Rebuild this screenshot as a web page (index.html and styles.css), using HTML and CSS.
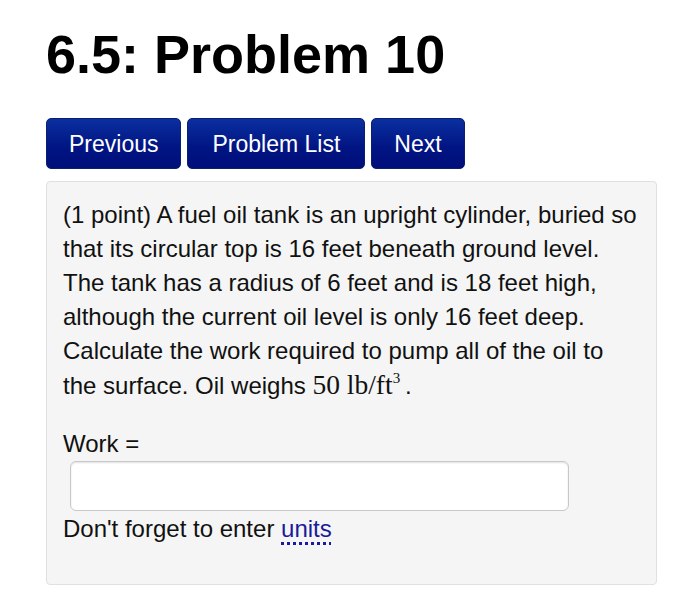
FILE: index.html
```html
<!DOCTYPE html>
<html>
<head>
<meta charset="utf-8">
<link rel="stylesheet" href="styles.css">
</head>
<body>
<h1 class="title">6.5: Problem 10</h1>
<div class="nav">
  <a class="btn">Previous</a>
  <a class="btn btn-wide">Problem List</a>
  <a class="btn">Next</a>
</div>
<div class="panel">
  <p class="text">(1 point) A fuel oil tank is an upright cylinder, buried so that its circular top is 16 feet beneath ground level. The tank has a radius of 6 feet and is 18 feet high, although the current oil level is only 16 feet deep. Calculate the work required to pump all of the oil to the surface. Oil weighs <span class="math">50&nbsp;lb/ft<sup>3</sup></span>&thinsp;.</p>
  <p class="label">Work =</p>
  <div class="input"></div>
  <p class="hint">Don't forget to enter <a class="units">units</a></p>
</div>
</body>
</html>
```
FILE: styles.css
```css
html, body { margin: 0; padding: 0; background: #fff; }
body {
  padding: 0 43px 0 46px;
  font-family: "Liberation Sans", Arial, sans-serif;
  color: #111;
}
.title {
  margin: 0;
  padding-top: 22px;
  font-size: 54px;
  line-height: 64px;
  font-weight: bold;
  color: #000;
}
.nav {
  display: flex;
  gap: 6px;
  margin-top: 32px;
}
.btn {
  display: block;
  height: 51px;
  line-height: 50px;
  padding: 0 22px;
  box-sizing: border-box;
  font-size: 23px;
  color: #fff;
  background: linear-gradient(#0b2f9f, #001482 60%, #000f7a);
  border: 1px solid #0a1f6e;
  border-radius: 5px;
}
.btn-wide { padding: 0 24px; }
.panel {
  margin-top: 12px;
  background: #f5f5f5;
  border: 1px solid #e0e0e0;
  border-radius: 4px;
  padding: 16px 16px 50px 16px;
  height: 404px;
  box-sizing: border-box;
}
.text {
  margin: 0;
  font-size: 24px;
  line-height: 34px;
}
.math {
  font-family: "Liberation Serif", "Times New Roman", serif;
  font-size: 27.5px;
}
.math sup { font-size: 15px; line-height: 0; vertical-align: 11px; }
.label {
  margin: 24px 0 0 0;
  font-size: 24px;
  line-height: 34px;
}
.input {
  margin: 0 0 0 7px;
  width: 499px;
  height: 50px;
  box-sizing: border-box;
  background: #fff;
  border: 1px solid #c8c8c8;
  border-radius: 6px;
  box-shadow: inset 0 1px 2px rgba(0,0,0,0.12);
}
.hint {
  margin: 1px 0 0 0;
  font-size: 24px;
  line-height: 34px;
}
.units {
  color: #1a1a9c;
  text-decoration: underline dotted;
  text-decoration-thickness: 3px;
  text-underline-offset: 5px;
}
```
